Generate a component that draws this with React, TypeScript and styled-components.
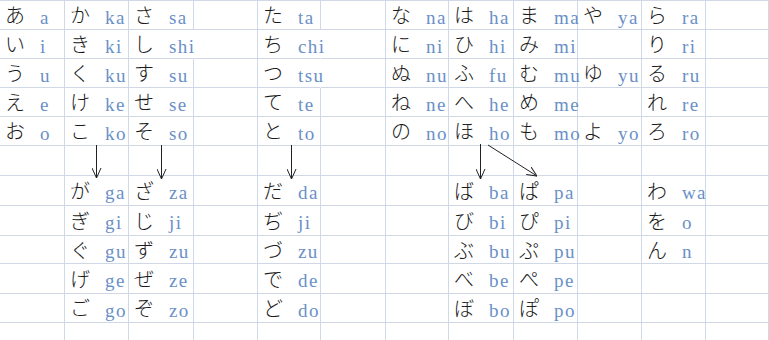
import React from 'react';
import styled, { createGlobalStyle } from 'styled-components';

type Entry = [string, string] | null;

const COLS = [65, 64, 65, 64, 63, 65, 63, 65, 64, 64, 64, 63];
const ROWS = [29, 29, 29, 29, 29, 30, 30, 30, 28, 30, 29, 29];

const col = (kana: string, romaji: string) => ({ kana: Array.from(kana), romaji: romaji.split(' ') });

// column index -> kana block above / below the arrow row
const top: Record<number, { kana: string[]; romaji: string[] }> = {
    0: col('あいうえお', 'a i u e o'),
    1: col('かきくけこ', 'ka ki ku ke ko'),
    2: col('さしすせそ', 'sa shi su se so'),
    4: col('たちつてと', 'ta chi tsu te to'),
    6: col('なにぬねの', 'na ni nu ne no'),
    7: col('はひふへほ', 'ha hi fu he ho'),
    8: col('まみむめも', 'ma mi mu me mo'),
    9: { kana: ['や', '', 'ゆ', '', 'よ'], romaji: ['ya', '', 'yu', '', 'yo'] },
    10: col('らりるれろ', 'ra ri ru re ro'),
};

const bottom: Record<number, { kana: string[]; romaji: string[] }> = {
    1: col('がぎぐげご', 'ga gi gu ge go'),
    2: col('ざじずぜぞ', 'za ji zu ze zo'),
    4: col('だぢづでど', 'da ji zu de do'),
    7: col('ばびぶべぼ', 'ba bi bu be bo'),
    8: col('ぱぴぷぺぽ', 'pa pi pu pe po'),
    10: { kana: ['わ', 'を', 'ん', '', ''], romaji: ['wa', 'o', 'n', '', ''] },
};

const entryAt = (r: number, c: number): Entry => {
    const block = r < 5 ? top[c] : r >= 6 && r < 11 ? bottom[c] : undefined;
    if (!block) return null;
    const i = r < 5 ? r : r - 6;
    const k = block.kana[i];
    return k ? [k, block.romaji[i]] : null;
};

const ARROWS = [
    { x1: 96.5, y1: 145, x2: 96.5, y2: 178 },
    { x1: 161.5, y1: 145, x2: 161.5, y2: 179 },
    { x1: 291.5, y1: 145, x2: 291.5, y2: 179 },
    { x1: 480.5, y1: 144, x2: 480.5, y2: 179 },
    { x1: 488, y1: 145, x2: 537, y2: 176 },
];

export default function App() {
    const cells = [];
    for (let r = 0; r < ROWS.length; r++) {
        for (let c = 0; c < COLS.length; c++) {
            const e = entryAt(r, c);
            const long = !!e && e[1].length > 2;
            cells.push(
                <Cell key={`${r}-${c}`} $spill={long}>
                    {e && (
                        <>
                            <Kana>{e[0]}</Kana>
                            <Romaji>{e[1]}</Romaji>
                        </>
                    )}
                </Cell>
            );
        }
    }

    return (
        <>
            <GlobalStyle />
            <Sheet>
                <Grid>{cells}</Grid>
                <ArrowLayer width={769} height={340}>
                    <defs>
                        <marker id="head" viewBox="0 0 10 10" refX="10" refY="5" markerWidth="10" markerHeight="10" markerUnits="userSpaceOnUse" orient="auto">
                            <path d="M0 0.5 L10 5 L0 9.5" fill="none" stroke="#222" strokeWidth="1" />
                        </marker>
                    </defs>
                    {ARROWS.map((a, i) => (
                        <line key={i} {...a} stroke="#222" strokeWidth="1" markerEnd="url(#head)" />
                    ))}
                </ArrowLayer>
            </Sheet>
        </>
    );
}

const GlobalStyle = createGlobalStyle`
    html, body {
        margin: 0;
        padding: 0;
        background: #ffffff;
        overflow: hidden;
    }
`;

const Sheet = styled.div`
    position: relative;
    width: 769px;
    height: 340px;
    overflow: hidden;
`;

const Grid = styled.div`
    display: grid;
    grid-template-columns: ${COLS.map(w => `${w}px`).join(' ')};
    grid-template-rows: ${ROWS.map(h => `${h}px`).join(' ')};
    border-top: 1px solid #d0d7e5;
`;

const Cell = styled.div<{ $spill: boolean }>`
    box-sizing: border-box;
    display: flex;
    align-items: center;
    padding-left: 5px;
    border-bottom: 1px solid #d0d7e5;
    border-right: 1px solid ${p => (p.$spill ? 'transparent' : '#d0d7e5')};
    white-space: nowrap;
    position: relative;
    z-index: ${p => (p.$spill ? 1 : 0)};
`;

const Kana = styled.span`
    width: 35px;
    flex: none;
    font-family: "Noto Sans CJK JP", sans-serif;
    font-size: 20px;
    font-weight: 300;
    line-height: 20px;
    color: #1a1a1a;
`;

const Romaji = styled.span`
    font-family: "Liberation Serif", "DejaVu Serif", serif;
    font-size: 19px;
    letter-spacing: 1.4px;
    line-height: 20px;
    padding-top: 5px;
    color: #6a90c8;
`;

const ArrowLayer = styled.svg`
    position: absolute;
    left: 0;
    top: 0;
    pointer-events: none;
`;
